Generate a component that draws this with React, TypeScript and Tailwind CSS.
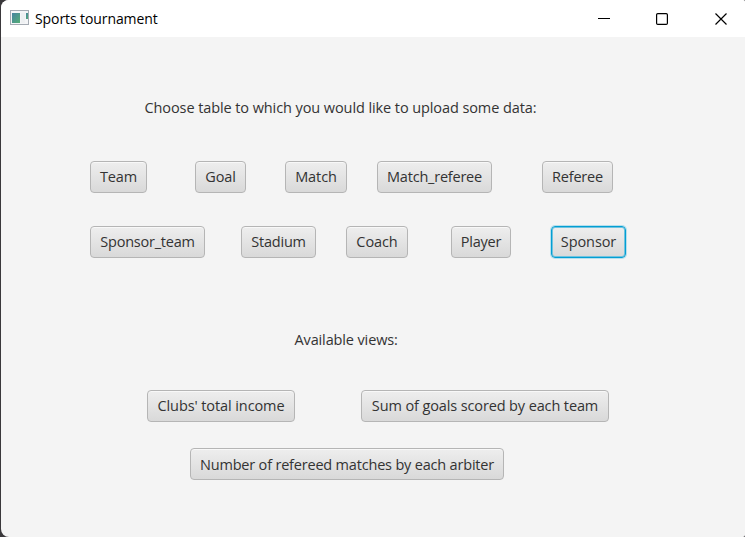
import React from 'react';

function Button({ label, size, focused = false }: { label: string; size: string; focused?: boolean }) {
  const frame = focused
    ? 'border-[#039ed3] shadow-[0_0_0_1px_#b5dfed,inset_0_0_0_1px_#6fc3df]'
    : 'border-[#b5b5b5] shadow-[inset_0_1px_0_#f8f8f8]';
  return (
    <button
      className={`flex h-8 shrink-0 items-center justify-center whitespace-nowrap rounded-[4px] border bg-linear-to-b from-[#eeeeee] to-[#d9d9d9] ${frame} ${size}`}
    >
      {label}
    </button>
  );
}

function AppIcon() {
  return (
    <svg className="-mt-0.5" width="19" height="15" viewBox="0 0 19 15" shapeRendering="crispEdges">
      <defs>
        <linearGradient id="screen" x1="0" y1="0" x2="1" y2="1">
          <stop offset="0" stopColor="#4683a0" />
          <stop offset="1" stopColor="#55ae76" />
        </linearGradient>
      </defs>
      <rect x="0.5" y="0.5" width="18" height="14" fill="#f4f5f7" stroke="#a5abb3" />
      <rect x="2" y="3" width="8" height="10" fill="url(#screen)" />
      <rect x="11" y="3" width="4" height="10" fill="#eef0f2" />
      <rect x="16" y="3" width="2" height="6" fill="url(#screen)" />
    </svg>
  );
}

export default function App() {
  return (
    <div className="h-[537px] w-[745px] overflow-hidden bg-[#3a383b] pl-px font-['Open_Sans',sans-serif] text-[14.5px] leading-5 tracking-[-0.09px] text-[#333333]">
      <div className="flex h-[537px] flex-col overflow-hidden rounded-l-[8px] rounded-r-[2px] bg-[#f4f4f4]">
        <header className="flex h-[37px] shrink-0 items-center bg-white pl-[9px] text-black">
          <AppIcon />
          <h1 className="ml-1.5 grow text-[14px]">Sports tournament</h1>
          <svg width="147" height="36" viewBox="0 0 147 36" fill="none" stroke="black" strokeWidth="1.2">
            <path d="M0 17.5h12" shapeRendering="crispEdges" strokeWidth="1" />
            <rect x="58.6" y="12.6" width="10.8" height="10.8" rx="1.2" />
            <path d="m117.5 12.5 11 11m0-11-11 11" />
          </svg>
        </header>
        <main>
          <p className="ml-[143.5px] mt-[61px]">Choose table to which you would like to upload some data:</p>
          <div className="ml-[89px] mt-[43px] flex">
            <Button label="Team" size="w-[57px]" />
            <Button label="Goal" size="ml-12 w-[51px]" />
            <Button label="Match" size="ml-[39px] w-[62px]" />
            <Button label="Match_referee" size="ml-[30px] w-[115px] tracking-[-0.22px]" />
            <Button label="Referee" size="ml-[50px] w-[71px] tracking-[-0.22px]" />
          </div>
          <div className="ml-[89px] mt-[33px] flex">
            <Button label="Sponsor_team" size="w-[115px] tracking-[-0.22px]" />
            <Button label="Stadium" size="ml-9 w-[75px] tracking-[-0.2px]" />
            <Button label="Coach" size="ml-[30px] w-[62px]" />
            <Button label="Player" size="ml-[43px] w-[60px] tracking-[-0.2px]" />
            <Button label="Sponsor" size="ml-10 w-[75px]" focused />
          </div>
          <p className="ml-[293.5px] mt-[72px] tracking-[-0.13px]">Available views:</p>
          <div className="ml-[146px] mt-10 flex">
            <Button label="Clubs' total income" size="w-[148px]" />
            <Button label="Sum of goals scored by each team" size="ml-[66px] w-[248px] tracking-[-0.12px]" />
          </div>
          <div className="ml-[189px] mt-[26px] flex">
            <Button label="Number of refereed matches by each arbiter" size="w-[314px] pt-px tracking-[-0.19px]" />
          </div>
        </main>
      </div>
    </div>
  );
}
